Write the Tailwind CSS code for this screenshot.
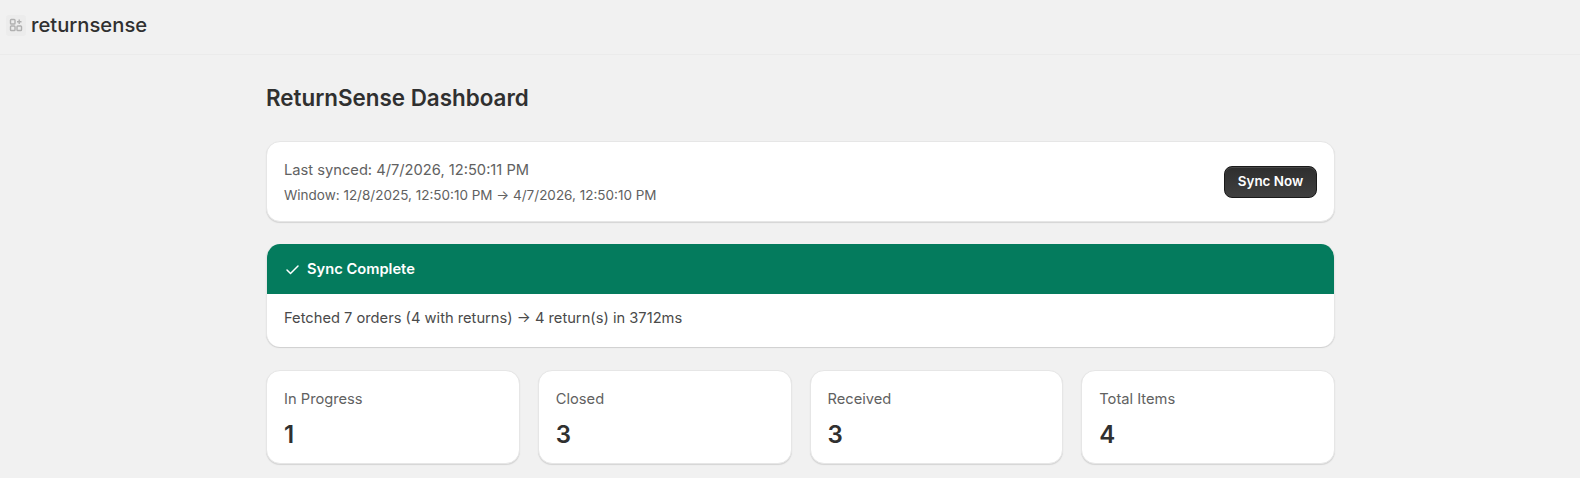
<!DOCTYPE html>
<html lang="en">
<head>
    <meta charset="UTF-8">
    <meta name="viewport" content="width=device-width, initial-scale=1.0">
    <title>ReturnSense Dashboard</title>
    <script src="https://cdn.jsdelivr.net/npm/@tailwindcss/browser@4"></script>
</head>
<body class="bg-[#f1f1f1] font-['Inter',sans-serif] text-[#303030] h-[478px] overflow-hidden">

<!-- App bar -->
<header class="h-[55px] border-b border-[#ebebeb] flex items-center pl-[6px] gap-[5px] pb-[4px]">
    <div class="w-[20px] h-[21px] rounded-[3px] bg-[#ececec] flex items-center justify-center">
        <svg width="14" height="14" viewBox="0 0 14 14" fill="none" stroke="#b0b0b0" stroke-width="1.4">
            <rect x="1.5" y="1.5" width="4.5" height="4.5" rx="0.8"/>
            <rect x="1.5" y="8" width="4.5" height="4.5" rx="0.8"/>
            <rect x="8" y="8" width="4.5" height="4.5" rx="0.8"/>
            <path d="M10.2 1.5v4.5M8 3.7h4.5"/>
        </svg>
    </div>
    <span class="text-[20.2px] font-medium text-[#303030]">returnsense</span>
</header>

<main class="w-[1069px] ml-[266px]">
    <h1 class="text-[22.4px] leading-[28px] font-semibold text-[#303030] mt-[29px] mb-[29px]">ReturnSense Dashboard</h1>

    <!-- Sync status -->
    <section class="h-[81px] bg-white rounded-[14px] border border-[#e6e6e6] shadow-[0_1px_1px_#d4d4d4] flex items-center justify-between pl-[17px] pr-[17px]">
        <div class="flex flex-col gap-[6px] text-[#616161]">
            <p class="text-[14.7px] leading-[20px]">Last synced: 4/7/2026, 12:50:11 PM</p>
            <p class="text-[13.5px] leading-[18px]">Window: 12/8/2025, 12:50:10 PM → 4/7/2026, 12:50:10 PM</p>
        </div>
        <button class="w-[93px] h-[32px] rounded-[8px] bg-linear-to-b from-[#2e2e2e] to-[#404040] border border-[#1a1a1a] shadow-[inset_0_1px_0_#484848] text-white text-[13.4px] font-semibold">Sync Now</button>
    </section>

    <!-- Sync result banner -->
    <section class="mt-[22px] h-[103px] bg-white rounded-[14px] border-x border-[#e6e6e6] shadow-[0_1px_1px_#cfcfcf] overflow-hidden">
        <div class="h-[50px] -mx-px bg-[#047b5d] flex items-center pl-[18px] gap-[6px] text-white">
            <svg width="17" height="17" viewBox="0 0 17 17" fill="none" stroke="white" stroke-width="1.5" stroke-linecap="round" stroke-linejoin="round">
                <path d="M3 9l3.5 3.5L14 5"/>
            </svg>
            <span class="text-[14.7px] font-semibold">Sync Complete</span>
        </div>
        <p class="pl-[17px] pt-[14px] text-[14.7px] leading-[20px] text-[#4a4a4a]">Fetched 7 orders (4 with returns) → 4 return(s) in 3712ms</p>
    </section>

    <!-- Stat cards -->
    <section class="mt-[23px] grid grid-cols-4 gap-[18px]">
        <div class="h-[94px] bg-white rounded-[14px] border border-[#e6e6e6] shadow-[0_1px_1px_#d4d4d4] pl-[17px] pt-[18px]">
            <p class="text-[14.7px] leading-[20px] text-[#616161]">In Progress</p>
            <p class="mt-[11px] text-[24px] leading-[30px] font-semibold">1</p>
        </div>
        <div class="h-[94px] bg-white rounded-[14px] border border-[#e6e6e6] shadow-[0_1px_1px_#d4d4d4] pl-[17px] pt-[18px]">
            <p class="text-[14.7px] leading-[20px] text-[#616161]">Closed</p>
            <p class="mt-[11px] text-[24px] leading-[30px] font-semibold">3</p>
        </div>
        <div class="h-[94px] bg-white rounded-[14px] border border-[#e6e6e6] shadow-[0_1px_1px_#d4d4d4] pl-[17px] pt-[18px]">
            <p class="text-[14.7px] leading-[20px] text-[#616161]">Received</p>
            <p class="mt-[11px] text-[24px] leading-[30px] font-semibold">3</p>
        </div>
        <div class="h-[94px] bg-white rounded-[14px] border border-[#e6e6e6] shadow-[0_1px_1px_#d4d4d4] pl-[17px] pt-[18px]">
            <p class="text-[14.7px] leading-[20px] text-[#616161]">Total Items</p>
            <p class="mt-[11px] text-[24px] leading-[30px] font-semibold">4</p>
        </div>
    </section>
</main>

</body>
</html>
